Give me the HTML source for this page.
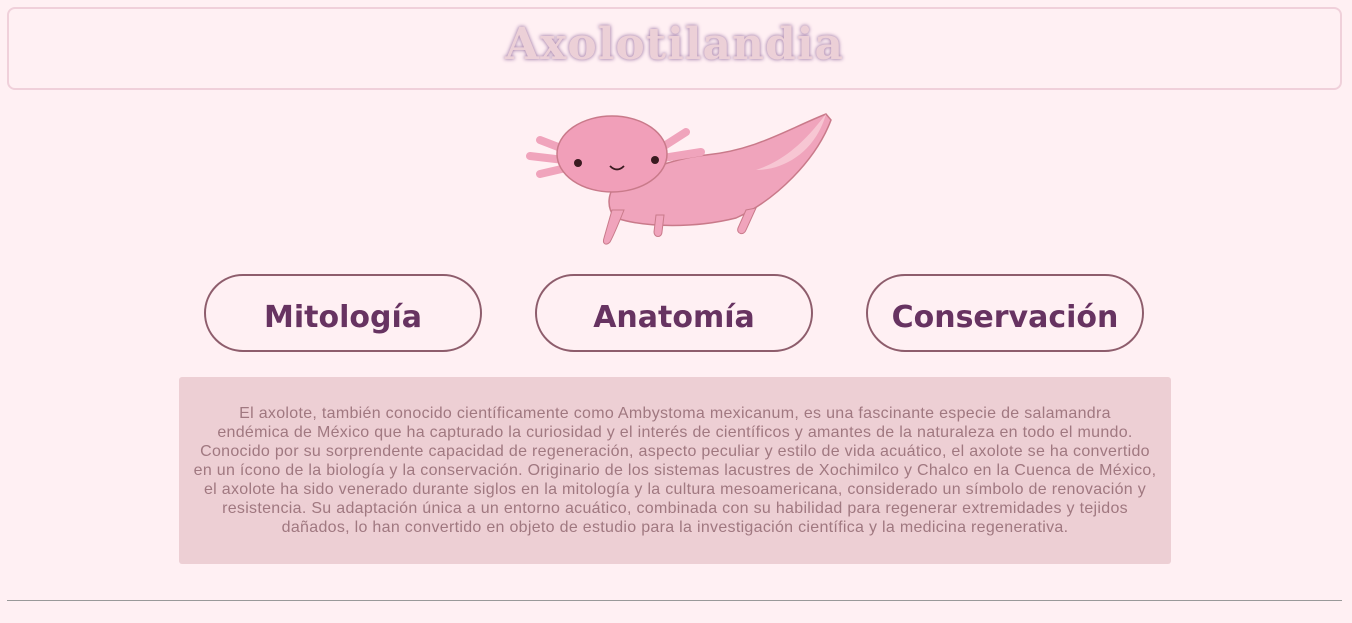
<!DOCTYPE html>
<html><head><meta charset="utf-8"><style>
body{margin:0;background:#fff0f3;width:1352px;height:623px;overflow:hidden;font-family:"Liberation Sans",sans-serif;position:relative}
.hdr{position:absolute;left:7px;top:7px;width:1331px;height:79px;border:2px solid #f0d0da;border-radius:8px}
.hdr h1{margin:0;text-align:center;font-family:"DejaVu Serif","Liberation Serif",serif;font-weight:bold;font-size:44px;line-height:72px;color:#ecd0d7;text-shadow:0 0 3px #a888b0,0 0 5px #c7a9c7;letter-spacing:1px}
.btn{position:absolute;top:274px;width:274px;height:74px;border:2px solid #8e5d6c;border-radius:40px;text-align:center;line-height:84px;font-family:"DejaVu Sans","Liberation Sans",sans-serif;font-weight:bold;font-size:30px;color:#673361}
.box{position:absolute;left:179px;top:377px;width:992px;height:187px;background:#edcfd4;border-radius:3px;text-align:center;color:#a07880;font-size:16px;line-height:19px;letter-spacing:0.3px}
.box p{margin:27px 0 0}
hr{position:absolute;left:7px;top:600px;width:1335px;margin:0;border:0;border-top:1px solid #999}
</style></head><body>
<div class="hdr"><h1>Axolotilandia</h1></div>
<svg style="position:absolute;left:526px;top:110px" width="310" height="140" viewBox="0 0 310 140">
<path d="M300 4 C260 20 230 40 180 45 C150 48 120 60 95 70 C80 80 80 100 90 108 C120 118 170 118 210 108 C250 90 290 50 305 10 Z" fill="#f0a4bc" stroke="#c97a8a" stroke-width="1.5"/>
<path d="M300 4 C280 30 260 50 230 60 C260 60 290 40 300 4Z" fill="#f7c6d3"/>
<path d="M98 100 C92 115 88 125 84 132 C80 136 76 134 78 128 L86 100Z" fill="#f0a4bc" stroke="#c97a8a"/>
<path d="M130 105 L128 122 C128 128 136 128 136 122 L138 105Z" fill="#f0a4bc" stroke="#c97a8a"/>
<path d="M220 100 L212 118 C210 124 218 126 220 120 L230 98Z" fill="#f0a4bc" stroke="#c97a8a"/>
<path d="M40 40 L14 30 M38 50 L4 46 M40 58 L14 64" stroke="#f0a4bc" stroke-width="8" stroke-linecap="round"/>
<path d="M135 38 L160 22 M137 48 L175 42 M135 58 L165 62" stroke="#f0a4bc" stroke-width="8" stroke-linecap="round"/>
<ellipse cx="86" cy="44" rx="55" ry="38" fill="#f19fb9" stroke="#c97a8a" stroke-width="1.5"/>
<circle cx="52" cy="53" r="4" fill="#3a1a20"/><circle cx="129" cy="50" r="4" fill="#3a1a20"/>
<path d="M84 56 Q91 63 98 56" stroke="#3a1a20" stroke-width="1.8" fill="none"/>
</svg>
<div class="btn" style="left:204px">Mitología</div>
<div class="btn" style="left:535px">Anatomía</div>
<div class="btn" style="left:866px">Conservación</div>
<div class="box"><p>El axolote, también conocido científicamente como Ambystoma mexicanum, es una fascinante especie de salamandra<br>endémica de México que ha capturado la curiosidad y el interés de científicos y amantes de la naturaleza en todo el mundo.<br>Conocido por su sorprendente capacidad de regeneración, aspecto peculiar y estilo de vida acuático, el axolote se ha convertido<br>en un ícono de la biología y la conservación. Originario de los sistemas lacustres de Xochimilco y Chalco en la Cuenca de México,<br>el axolote ha sido venerado durante siglos en la mitología y la cultura mesoamericana, considerado un símbolo de renovación y<br>resistencia. Su adaptación única a un entorno acuático, combinada con su habilidad para regenerar extremidades y tejidos<br>dañados, lo han convertido en objeto de estudio para la investigación científica y la medicina regenerativa.</p></div>
<hr>
</body></html>
